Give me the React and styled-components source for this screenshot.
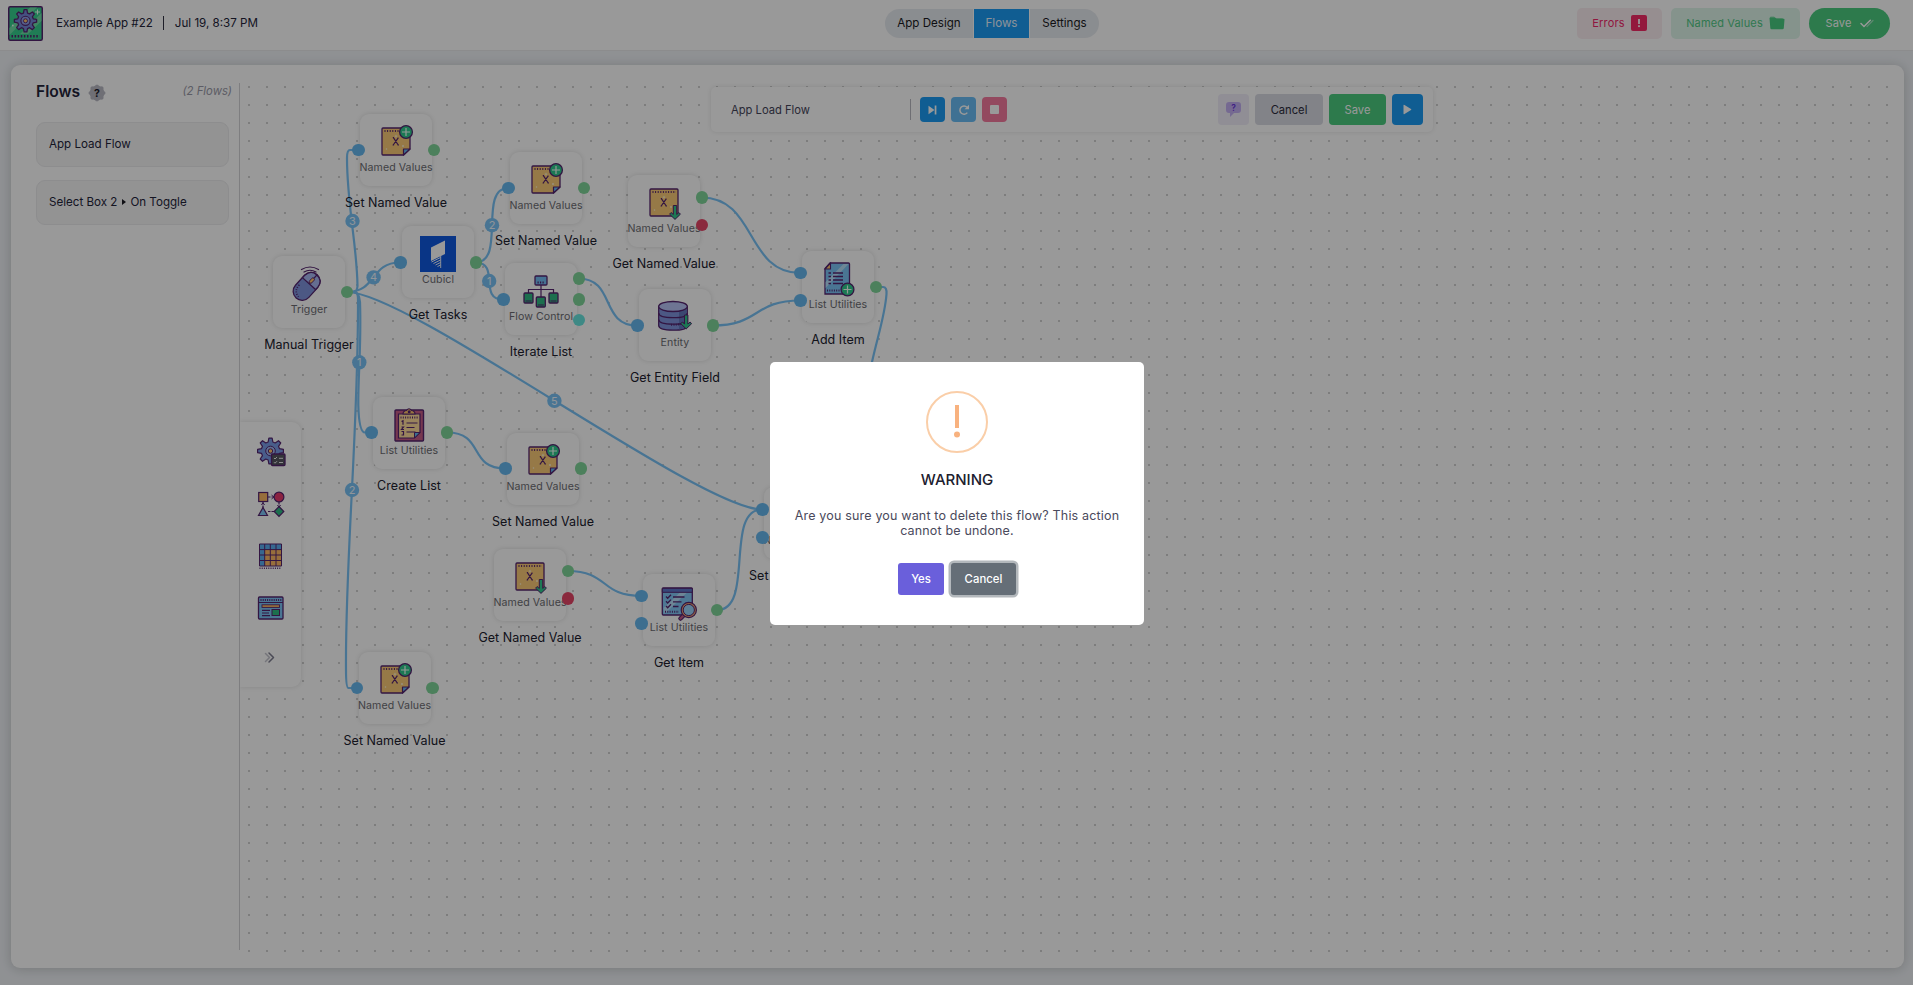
import React from "react";
import styled, { createGlobalStyle } from "styled-components";

const Global = createGlobalStyle`
  * { box-sizing: border-box; }
  html, body { margin: 0; height: 100%; overflow: hidden; }
  body { font-family: Inter, "Liberation Sans", sans-serif; font-size: 11.6px; color: #24243a; background: #eff2f6; }
  button { font: inherit; border: 0; padding: 0; margin: 0; cursor: pointer; }
  svg { display: block; }
`;

const INK = "#55246f";

/* ---------- page shell ---------- */
const Page = styled.div`
  height: 985px;
  display: flex;
  flex-direction: column;
  background: #eff2f6;
`;
const Header = styled.header`
  height: 51px;
  flex: none;
  display: grid;
  grid-template-columns: 885px 1fr auto;
  padding-right: 23px;
  background: #fff;
  border-bottom: 1px solid #eaeaec;
`;
const Brand = styled.div`
  display: flex;
  align-items: flex-start;
  padding: 6px 0 0 8px;
`;
const BrandText = styled.div`
  display: flex;
  align-items: center;
  height: 34px;
  margin-left: 13px;
`;
const BrandRule = styled.i`
  width: 1px;
  height: 14px;
  margin: 0 11px 0 10px;
  background: #333344;
`;
const Tabs = styled.nav`
  display: flex;
  gap: 1px;
  padding-top: 9px;
`;
const Tab = styled.button`
  width: ${(p) => p.$w}px;
  height: 29px;
  padding-bottom: 1px;
  background: ${(p) => (p.$active ? "#1b9cf4" : "#e7ebf0")};
  color: ${(p) => (p.$active ? "#e8f4ff" : "#1a1a22")};
  border-radius: ${(p) => p.$radius || "0"};
`;
const HeaderActions = styled.div`
  display: flex;
  gap: 9px;
  padding-top: 8px;
`;
const HeaderButton = styled.button`
  display: flex;
  align-items: center;
  justify-content: center;
  gap: ${(p) => p.$gap || 6}px;
  width: ${(p) => p.$w}px;
  height: 31px;
  padding-bottom: 1px;
  font-size: 11px;
  letter-spacing: 0.15px;
  border-radius: ${(p) => p.$radius || 5}px;
  background: ${(p) => p.$bg};
  color: ${(p) => p.$fg};
`;
const Board = styled.main`
  flex: 1;
  display: flex;
  margin: 14px 9px 17px 11px;
  padding: 18px 10px 15px 25px;
  border-radius: 9px;
  background: #fff;
  box-shadow: 0 1px 12px rgba(20, 25, 20, 0.2);
`;

/* ---------- sidebar ---------- */
const Sidebar = styled.aside`
  width: 204px;
  height: 867px;
  border-right: 1px solid #d2d2d6;
  flex: none;
`;
const SidebarHead = styled.div`
  display: flex;
  align-items: center;
  height: 17px;
  padding-right: 7px;
`;
const SidebarTitle = styled.h1`
  margin: -1px 0 0;
  font-size: 15.6px;
  font-weight: 600;
`;
const Badge = styled.span`
  margin: 3px 0 0 8px;
`;
const Count = styled.em`
  margin-left: auto;
  margin-top: -2px;
  font-size: 11.3px;
  color: #9a9aa8;
`;
const FlowList = styled.div`
  display: flex;
  flex-direction: column;
  gap: 13px;
  margin-top: 22px;
`;
const FlowItem = styled.div`
  display: flex;
  align-items: center;
  width: 193px;
  height: 45px;
  padding: 0 12px 2px;
  border: 1px solid #ebebed;
  border-radius: 9px;
  background: #f5f5f6;
`;
const Caret = styled.i`
  margin: 0 4px 0 5px;
  border: 3.5px solid transparent;
  border-left: 4px solid #1a1a22;
  border-right: 0;
`;

/* ---------- canvas ---------- */
const Canvas = styled.section`
  position: relative;
  flex: 1;
  height: 870px;
  overflow: hidden;
  background: conic-gradient(from 270deg at 2px 2px, #d0d0d0 90deg, transparent 0) 8px 3px / 18px 18px;
`;
const Wires = styled.svg`
  position: absolute;
  left: -240px;
  top: -83px;
`;
const NodeBox = styled.div`
  position: absolute;
  left: ${(p) => p.$x - 240}px;
  top: ${(p) => p.$y - 83}px;
  width: 72px;
  height: 72px;
  display: flex;
  flex-direction: column;
  align-items: center;
  border-radius: 9px;
  background: #fff;
  box-shadow: 0 0 5px rgba(0, 0, 0, 0.13);
`;
const NodeIcon = styled.div`
  height: 46px;
  display: flex;
  align-items: flex-start;
  padding-top: 10px;
`;
const NodeKind = styled.div`
  font-size: 10.6px;
  line-height: 16px;
  letter-spacing: 0.08px;
  white-space: nowrap;
  color: #6c6c72;
`;
const NodeName = styled.div`
  margin-top: 19px;
  font-size: 12.5px;
  line-height: 16px;
  letter-spacing: 0.03px;
  white-space: nowrap;
  color: #20202e;
`;
const Port = styled.i`
  position: absolute;
  left: ${(p) => (p.$side === "in" ? -8 : 67.5)}px;
  top: ${(p) => p.$at - 6.25}px;
  width: 12.5px;
  height: 12.5px;
  border-radius: 50%;
  background: ${(p) => p.$c};
`;
const Palette = styled.div`
  position: absolute;
  left: 0;
  top: 339px;
  width: 61px;
  height: 265px;
  padding: 15px 0 0 16px;
  display: flex;
  flex-direction: column;
  gap: 22px;
  border-radius: 0 9px 9px 0;
  background: #fff;
  box-shadow: 0 0 5px rgba(0, 0, 0, 0.12);
`;
const PaletteItem = styled.div`
  width: 30px;
  height: 30px;
`;
const Toolbar = styled.div`
  position: absolute;
  left: 471px;
  top: 4px;
  width: 722px;
  height: 45px;
  display: flex;
  align-items: center;
  padding: 0 10px 0 20px;
  border-radius: 5px;
  background: #fff;
  box-shadow: 0 0 5px rgba(0, 0, 0, 0.1);
`;
const ToolbarName = styled.div`
  width: 179px;
  font-size: 11.2px;
  color: #45455a;
`;
const ToolbarRule = styled.i`
  width: 1px;
  height: 21px;
  margin-right: 9px;
  background: #b8b8c0;
`;
const ToolGroup = styled.div`
  display: flex;
  gap: 6px;
  margin-left: ${(p) => (p.$end ? "auto" : "0")};
`;
const ToolButton = styled.button`
  width: ${(p) => p.$w || 25}px;
  height: ${(p) => p.$h || 25}px;
  display: flex;
  align-items: center;
  justify-content: center;
  font-size: 11.2px;
  border-radius: 4px;
  background: ${(p) => p.$bg};
  color: ${(p) => p.$fg || "#fff"};
`;

/* ---------- dialog ---------- */
const Scrim = styled.div`
  position: fixed;
  inset: 0;
  display: flex;
  justify-content: center;
  align-items: flex-start;
  padding: 362px 0 0 1px;
  background: rgba(0, 0, 0, 0.4);
`;
const Dialog = styled.div`
  width: 374px;
  height: 263px;
  display: flex;
  flex-direction: column;
  align-items: center;
  padding-top: 29px;
  border-radius: 5px;
  background: #fff;
`;
const DialogTitle = styled.h2`
  margin: 17px 0 0;
  font-size: 15px;
  line-height: 20px;
  font-weight: 500;
  color: #20202e;
`;
const DialogText = styled.p`
  width: 340px;
  margin: 18px 0 0;
  text-align: center;
  font-size: 12.5px;
  line-height: 15px;
  letter-spacing: 0.17px;
  color: #4a4a5c;
`;
const DialogActions = styled.div`
  display: flex;
  gap: 7px;
  margin-top: 25px;
`;
const DialogButton = styled.button`
  width: ${(p) => p.$w}px;
  height: 32px;
  border-radius: 3px;
  font-size: 11.3px;
  font-weight: 500;
  letter-spacing: 0.05px;
  color: #fff;
  background: ${(p) => p.$bg};
  box-shadow: ${(p) => (p.$focus ? "0 0 0 2.5px #b3b8bc" : "none")};
`;

/* ---------- drawings ---------- */
const gearPath = (cx, cy, r, R, n = 8) => {
  let d = "";
  for (let i = 0; i < n; i++) {
    const a = (i * 2 * Math.PI) / n;
    const s = Math.PI / n;
    [[-0.65, r], [-0.32, R], [0.32, R], [0.65, r]].forEach(([k, q], j) => {
      const x = cx + q * Math.sin(a + k * s);
      const y = cy - q * Math.cos(a + k * s);
      d += (i || j ? "L" : "M") + x.toFixed(2) + " " + y.toFixed(2);
    });
  }
  return d + "Z";
};

const AppLogo = () => (
  <svg width="35" height="35" viewBox="0 0 35 35">
    <rect x="0.75" y="0.75" width="33.5" height="33.5" rx="1.5" fill="#36cf8e" stroke={INK} strokeWidth="1.5" />
    <path d="M1.5 22 22 1.5h7L1.5 29zM12 28 33.5 7v8L20 28z" fill="#6fdca6" />
    <path d={gearPath(17.5, 14.8, 8, 11.2)} fill="#7487d6" stroke={INK} strokeWidth="1.3" strokeLinejoin="round" />
    <circle cx="17.5" cy="14.8" r="4.6" fill="#8ea0e8" stroke={INK} strokeWidth="1.1" />
    <circle cx="17.5" cy="14.8" r="2" fill="#ffc46b" stroke={INK} strokeWidth="0.9" />
    <path d="M3.5 30.2h28" stroke={INK} strokeWidth="2.4" strokeDasharray="1.5 1.6" />
    <path d="M29.5 3.5v5M27 6h5" stroke="#e6fff3" strokeWidth="1.1" />
    <circle cx="4.8" cy="19.5" r="0.9" fill="#e6fff3" />
  </svg>
);

const Plus = ({ x, y }) => (
  <g>
    <circle cx={x} cy={y} r="6.4" fill="#30c88c" stroke={INK} strokeWidth="1.3" />
    <path d={`M${x} ${y - 4}v8M${x - 4} ${y}h8`} stroke="#f2fff9" strokeWidth="1.2" />
  </g>
);
const DownArrow = ({ x, y }) => (
  <path
    d={`M${x - 1.7} ${y}h3.4v9l2.2-2 1.5 1.7-5.4 5.2-5.4-5.2 1.5-1.7 2.2 2z`}
    fill="#30c88c" stroke={INK} strokeWidth="1" strokeLinejoin="round"
  />
);

const NoteIcon = ({ mode }) => (
  <svg width="36" height="36" viewBox="0 0 36 36">
    <path
      d={mode === "set" ? "M5 4h26q1 0 1 1v20l-6.500 6H5q-1 0-1-1V5q0-1 1-1z" : "M5 4h26q1 0 1 1v25q0 1-1 1H5q-1 0-1-1V5q0-1 1-1z"}
      fill="#fbca77" stroke={INK} strokeWidth="1.3"
    />
    <path d="M6.5 7.1H30" stroke={INK} strokeWidth="2" strokeDasharray="1 1.6" />
    <path d="m15.400 13.600 4.800 7.400M20.400 13.600 15.200 21M14.600 21h1.500M19.500 21H21M14.800 13.600h1.300" fill="none" stroke={INK} strokeWidth="1.2" />
    <circle cx="8.5" cy="25" r="0.8" fill="#fff4d8" />
    <circle cx="25" cy="22" r="0.9" fill="#fff4d8" />
    <path d="M18 10.800v2.800M16.700 12.200h2.600" stroke="#fff4d8" strokeWidth="0.8" />
    {mode === "set" ? (
      <>
        <path d="M25.500 31v-6H32z" fill="#65b7f2" stroke={INK} strokeWidth="1.2" strokeLinejoin="round" />
        <Plus x={28} y={8} />
      </>
    ) : (
      <DownArrow x={29} y={20.5} />
    )}
  </svg>
);

const MouseIcon = () => (
  <svg width="36" height="36" viewBox="0 0 36 36">
    <path d="M10.500 3.500q8.500-5 17 0M13 6q6-3.500 12 0" fill="none" stroke={INK} strokeWidth="1.2" strokeLinecap="round" />
    <g transform="rotate(42 15.5 20.5)">
      <rect x="6.5" y="4.5" width="18" height="31.5" rx="9" fill="#7f93dc" stroke={INK} strokeWidth="1.3" />
      <path d="M6.700 16.700v-3.500Q7.700 5.200 15.500 5q8 .2 8.800 8.200v3.500z" fill="#a9b8f2" stroke={INK} strokeWidth="1.2" />
      <path d="M15.500 5v11.700" stroke={INK} strokeWidth="1.2" />
      <rect x="14" y="9.5" width="3" height="6" rx="1.3" fill="#ffc46b" stroke={INK} strokeWidth="0.9" />
      <path d="M9 24q0 8.500 7.500 9.500" fill="none" stroke={INK} strokeWidth="1.6" strokeDasharray="1 1.5" />
    </g>
  </svg>
);

const CubiclIcon = () => (
  <svg width="36" height="36" viewBox="0 0 36 36">
    <rect width="36" height="36" fill="#1059e0" />
    <path d="m11 11.500 14-7v13.500l-14 7z" fill="#fff" />
    <path d="m11.500 26 9-4.500M13.500 27.500l7-3.500M15.500 29l5-2.500M17.500 30.500l3-1.500M20.700 20v12" stroke="#fff" strokeWidth="0.9" />
  </svg>
);

const FlowIcon = () => (
  <svg width="36" height="36" viewBox="0 0 36 36">
    <path d="M18 12v12M5.500 22v-5.500h25V22" fill="none" stroke={INK} strokeWidth="1.2" />
    <rect x="12" y="3" width="12" height="9" rx="1" fill="#74bdf3" stroke={INK} strokeWidth="1.3" />
    <path d="M14.500 9.500h7" stroke={INK} strokeWidth="2" strokeDasharray="1.2 1.3" />
    {[[1, 20], [13.3, 24], [26, 20]].map(([x, y]) => (
      <g key={x}>
        <rect x={x} y={y} width="9" height="10" rx="1" fill="#2fba83" stroke={INK} strokeWidth="1.3" />
        <path d={`M${x + 1.5} ${y + 8}h6`} stroke={INK} strokeWidth="1" />
      </g>
    ))}
  </svg>
);

const DatabaseIcon = () => (
  <svg width="38" height="36" viewBox="0 0 38 36">
    <path d="M2.700 7.500v19q0 4.700 14.300 4.700t14.300-4.700v-19z" fill="#7f93dc" stroke={INK} strokeWidth="1.3" />
    <path d="M23 12v18.500q7.500-1.500 7.700-4V8z" fill="#6377bd" />
    <ellipse cx="17" cy="7.5" rx="14.3" ry="5" fill="#b7c3f5" stroke={INK} strokeWidth="1.3" />
    <path d="M2.700 14q0 4.700 14.300 4.700T31.300 14M2.700 20.500q0 4.700 14.300 4.700t14.300-4.700" fill="none" stroke={INK} strokeWidth="1.3" />
    <path d="M15 25.800q8 0 13-1.500" fill="none" stroke={INK} strokeWidth="2" strokeDasharray="1 1.3" />
    <DownArrow x={30.2} y={16} />
  </svg>
);

const DocIcon = () => (
  <svg width="36" height="36" viewBox="0 0 36 36">
    <path d="M10 2h18.500q1 0 1 1v29q0 1-1 1H5V7.500z" fill="#7cc3f5" stroke={INK} strokeWidth="1.3" />
    <path d="M5.600 21 23.500 3h5L5.600 27z" fill="#b7e0fb" />
    <path d="M5 8l5.500-5.800V8z" fill="#ffc46b" stroke={INK} strokeWidth="1.1" />
    <path d="M13 12h10M13 15.500h10M13 19h10M13 22.500h10" stroke={INK} strokeWidth="1.3" />
    <path d="M8.500 12H11M8.500 15.500H11M8.500 19H11M8.500 22.500H11" stroke={INK} strokeWidth="1.3" />
    <path d="M7 29.500h12.500" stroke={INK} strokeWidth="2" strokeDasharray="1 1.3" />
    <Plus x={27.5} y={28.5} />
  </svg>
);

const ClipboardIcon = () => (
  <svg width="36" height="36" viewBox="0 0 36 36">
    <rect x="4" y="3" width="28.5" height="31" rx="1" fill="#c65c86" stroke={INK} strokeWidth="1.4" />
    <path d="M7.500 7h21.500v18.500l-5.500 5.500h-16z" fill="#ffdc9c" stroke={INK} strokeWidth="1.2" />
    <path d="M23.500 31v-5.500H29z" fill="#65b7f2" stroke={INK} strokeWidth="1" />
    <path d="M12 7q0-3 3.500-3.500Q18 0 20.500 3.500 24 4 24 7z" fill="#ffc46b" stroke={INK} strokeWidth="1.2" />
    <circle cx="18.2" cy="4.8" r="1.5" fill={INK} />
    <path d="M9.500 10.500h18" stroke={INK} strokeWidth="2" strokeDasharray="1 1.3" />
    <path d="M15.500 16h11M15.500 20.500h8M15.500 25h9M10.500 14.500l1.500-.8v4M10.500 20h2l-2 2.500h2.500M10.500 24.500h2v3.500h-2" fill="none" stroke={INK} strokeWidth="1.2" />
  </svg>
);

const SearchListIcon = () => (
  <svg width="38" height="38" viewBox="0 0 38 38">
    <rect x="2.3" y="4" width="30" height="27" rx="1" fill="#82c6f6" stroke={INK} strokeWidth="1.3" />
    <path d="M3.500 24 20 8.500h7L4.500 30z" fill="#b7e0fb" />
    <path d="M2.300 4.300h30v4h-30z" fill="#5d75c9" stroke={INK} strokeWidth="1" />
    <path d="M6 12.500l1.700 1.700L11 10.800M6 17.300l1.700 1.700 3.300-3.400M6 22l1.700 1.700 3.300-3.400M13 13h11.500M13 17.800h8.500M13 22.500h5.500" fill="none" stroke={INK} strokeWidth="1.3" />
    <path d="M5 27.800h14" stroke={INK} strokeWidth="2" strokeDasharray="1 1.3" />
    <path d="m23.500 31.500-3 3" stroke={INK} strokeWidth="4.5" strokeLinecap="round" />
    <path d="m23.500 31.500-3 3" stroke="#c65c86" strokeWidth="2.3" strokeLinecap="round" />
    <circle cx="28.8" cy="26" r="7.6" fill="#f7a66e" stroke={INK} strokeWidth="1.2" />
    <circle cx="28.8" cy="26" r="5.6" fill="#9bd4fa" stroke={INK} strokeWidth="1" />
  </svg>
);

const GearTerminalIcon = () => (
  <svg width="30" height="30" viewBox="0 0 30 30">
    <path d={gearPath(14.5, 14, 9.3, 13)} fill="#7a9be6" stroke={INK} strokeWidth="1.2" strokeLinejoin="round" />
    <circle cx="14.5" cy="14" r="4.8" fill="#9fb8f2" stroke={INK} strokeWidth="1" />
    <circle cx="14.5" cy="14" r="2.2" fill="#ffc46b" stroke={INK} strokeWidth="1" />
    <rect x="15.5" y="17" width="13.5" height="11.5" rx="1" fill="#55555f" stroke={INK} strokeWidth="1.3" />
    <path d="m18 21 1 1 2-2m2 1.300h4M18 25.200l1 1 2-2m2 1.300h4" fill="none" stroke="#fff" strokeWidth="0.9" />
  </svg>
);
const ShapesIcon = () => (
  <svg width="30" height="30" viewBox="0 0 30 30">
    <path d="M12 8h6M7 13v6M23 13v5M12 22.500h6" stroke={INK} strokeWidth="1.2" strokeDasharray="2.5 1" />
    <path d="m15.500 6 2.500 2-2.500 2M5.300 16 7 13.800 8.700 16M21.300 16l1.700 2.200 1.700-2.200" fill="none" stroke={INK} strokeWidth="0.9" />
    <rect x="2.7" y="3.5" width="9" height="9" fill="#fcb864" stroke={INK} strokeWidth="1.2" />
    <circle cx="23" cy="8" r="4.9" fill="#e83a6d" stroke={INK} strokeWidth="1.2" />
    <path d="m7 18.500 4.500 8h-9z" fill="#7cc3f5" stroke={INK} strokeWidth="1.2" />
    <path d="m23 17.500 4.800 5-4.800 5-4.800-5z" fill="#30b983" stroke={INK} strokeWidth="1.2" />
  </svg>
);
const GridIcon = () => (
  <svg width="30" height="30" viewBox="0 0 30 30">
    <rect x="3.5" y="3" width="22" height="22" fill="#fcb864" />
    <path d="M3.500 3h22v5.500H8.700V25H3.500z" fill="#5aaef0" />
    <path d="M3.500 3h22v22h-22zM8.700 3v22M14.300 3v22M20 3v22M3.500 8.600h22M3.500 14h22M3.500 19.500h22" fill="none" stroke={INK} strokeWidth="1" />
    <path d="M3.500 27.200h22" stroke={INK} strokeWidth="1.4" strokeDasharray="1 1.2" />
  </svg>
);
const WindowIcon = () => (
  <svg width="30" height="30" viewBox="0 0 30 30">
    <rect x="2.5" y="4" width="24.5" height="22" rx="1" fill="#7cc3f5" stroke={INK} strokeWidth="1.3" />
    <path d="M4.500 7h21" stroke={INK} strokeWidth="2" strokeDasharray="1 1.2" />
    <path d="M2.500 9.500H27" stroke={INK} strokeWidth="1" />
    <rect x="6" y="11.8" width="17.5" height="2.6" fill="#fcb864" stroke={INK} strokeWidth="0.9" />
    <path d="M6 17.300h8M6 20h7M6 22.700h8" stroke={INK} strokeWidth="1.2" />
    <rect x="16" y="16.5" width="7.5" height="6" fill="#30b983" stroke={INK} strokeWidth="1" />
  </svg>
);
const MoreIcon = () => (
  <svg width="30" height="30" viewBox="0 0 30 30" fill="none" strokeWidth="1.5" strokeLinecap="round" strokeLinejoin="round">
    <path d="m9.500 8.500 4 4-4 4" stroke="#c3c3ce" />
    <path d="m13 8 4.500 4.500L13 17" stroke="#7d7d90" />
  </svg>
);

const HelpSeal = () => (
  <svg width="18" height="18" viewBox="0 0 18 18">
    <path d={gearPath(9, 9, 7.4, 8.4)} fill="#b9b9c4" />
    <text x="9" y="12.8" textAnchor="middle" fontSize="10.5" fontWeight="700" fill="#1c1c2b">?</text>
  </svg>
);
const ErrorMark = () => (
  <svg width="16" height="16" viewBox="0 0 16 16">
    <rect width="16" height="16" rx="2" fill="#f52a66" />
    <rect x="7.1" y="4" width="1.8" height="5" fill="#fff" />
    <rect x="7.1" y="10.3" width="1.8" height="1.8" fill="#fff" />
  </svg>
);
const FolderMark = () => (
  <svg width="16" height="14" viewBox="0 0 16 14">
    <path d="M1 3V1.500Q1 .5 2 .5h3l1.500 1.500H13q1 0 1.200 1z" fill="#8fdfb3" />
    <path d="M.5 2.300Q.5 1.600 1.300 1.600H6l1.500 1.200h7.200q.8 0 .8.700l-.7 8.500q-.1 1.300-1.300 1.300h-11q-1.100 0-1.200-1.300z" fill="#48cb80" />
  </svg>
);
const DoubleCheck = () => (
  <svg width="14" height="9" viewBox="0 0 14 9" fill="none" strokeLinecap="round">
    <path d="m7 7.500 6-6" stroke="#9fe2bc" strokeWidth="1.2" />
    <path d="m1 4.500 3 3 6.300-6.300" stroke="#fff" strokeWidth="1.5" />
  </svg>
);

const NextGlyph = () => (
  <svg width="9" height="10" viewBox="0 0 9 10"><path d="M.5.800 6.500 5 .5 9.200zM6.700.500h1.700v9H6.700z" fill="#fff" /></svg>
);
const RedoGlyph = () => (
  <svg width="12" height="12" viewBox="0 0 12 12">
    <path d="M9.300 8.600A4.100 4.100 0 1 1 9 3.300" fill="none" stroke="#fff" strokeWidth="1.5" />
    <path d="M11 .800v4.400H6.600z" fill="#fff" />
  </svg>
);
const StopGlyph = () => (
  <svg width="9" height="9" viewBox="0 0 9 9"><rect width="9" height="9" rx="1" fill="#fff" /></svg>
);
const PlayGlyph = () => (
  <svg width="9" height="11" viewBox="0 0 9 11"><path d="M.5 1.300Q.5.200 1.500.900l6.500 4q.7.600 0 1.200l-6.500 4q-1 .600-1-.5z" fill="#fff" /></svg>
);
const HelpBubble = () => (
  <svg width="15" height="15" viewBox="0 0 15 15">
    <path d="M3 0h9q3 0 3 3v5q0 3-3 3H8l-4 4v-4H3q-3 0-3-3V3q0-3 3-3z" fill="#c3b0f2" />
    <text x="7.5" y="8.8" textAnchor="middle" fontSize="8.5" fontWeight="600" fill="#6a35dc">?</text>
  </svg>
);
const WarningMark = () => (
  <svg width="62" height="62" viewBox="0 0 62 62">
    <circle cx="31" cy="31" r="30" fill="none" stroke="#facea8" strokeWidth="2" />
    <rect x="29" y="14" width="4" height="23" fill="#f8b27f" />
    <circle cx="31" cy="43.5" r="3" fill="#f8b27f" />
  </svg>
);

/* ---------- data ---------- */
const BLUE = "#66b8ee";
const GREEN = "#7fd599";
const RED = "#e64567";
const TEAL = "#68e5de";
const WIRE = "#79c2f5";

const noteSet = <NoteIcon mode="set" />;
const noteGet = <NoteIcon mode="get" />;
const NODES = [
  { x: 360, y: 114, kind: "Named Values", name: "Set Named Value", icon: noteSet, ins: [36], outs: [[36, GREEN]] },
  { x: 510, y: 152, kind: "Named Values", name: "Set Named Value", icon: noteSet, ins: [36], outs: [[36, GREEN]] },
  { x: 628, y: 175, kind: "Named Values", name: "Get Named Value", icon: noteGet, ins: [], outs: [[22.5, GREEN], [50, RED]] },
  { x: 402, y: 226, kind: "Cubicl", name: "Get Tasks", icon: <CubiclIcon />, ins: [36.5], outs: [[36.5, GREEN]] },
  { x: 273, y: 256, kind: "Trigger", name: "Manual Trigger", icon: <MouseIcon />, ins: [], outs: [[36, GREEN]] },
  { x: 505, y: 263, kind: "Flow Control", name: "Iterate List", icon: <FlowIcon />, ins: [36.5], outs: [[15.5, GREEN], [36.7, GREEN], [57, TEAL]] },
  { x: 639, y: 289, kind: "Entity", name: "Get Entity Field", icon: <DatabaseIcon />, ins: [36.5], outs: [[36.5, GREEN]] },
  { x: 802, y: 251, kind: "List Utilities", name: "Add Item", icon: <DocIcon />, ins: [22, 49.5], outs: [[36, GREEN]] },
  { x: 373, y: 397, kind: "List Utilities", name: "Create List", icon: <ClipboardIcon />, ins: [35.5], outs: [[35.5, GREEN]] },
  { x: 507, y: 433, kind: "Named Values", name: "Set Named Value", icon: noteSet, ins: [35.5], outs: [[35.5, GREEN]] },
  { x: 494, y: 549, kind: "Named Values", name: "Get Named Value", icon: noteGet, ins: [], outs: [[22, GREEN], [49.5, RED]] },
  { x: 643, y: 574, kind: "List Utilities", name: "Get Item", icon: <SearchListIcon />, ins: [22, 49.5], outs: [[36, GREEN]] },
  { x: 358.5, y: 652, kind: "Named Values", name: "Set Named Value", icon: noteSet, ins: [36], outs: [[36, GREEN]] },
  { x: 764, y: 487, kind: "Named Values", name: "Set Named Value", icon: noteSet, ins: [22.5, 50.5], outs: [[36, GREEN]] },
];

/* x1, y1, x2, y2, horizontal pull */
const EDGES = [
  [347, 292, 400, 262.5, 30],
  [347, 292, 762, 509.5, 62],
  [475.5, 262.5, 508.5, 188, 31],
  [475.5, 262.5, 503, 299.5, 25],
  [578.5, 278.5, 637, 325.5, 37],
  [701.5, 197.5, 800.5, 273, 55],
  [712.5, 325.5, 800.5, 300.5, 48],
  [447, 432.5, 505.5, 468.5, 38],
  [567.5, 571, 641.5, 596, 42],
  [717, 610, 762, 509.5, 38],
];

/* steep wires that leave and enter their ports through short stubs */
const STEEP = [
  "M347 292H354Q357 292 357.500 286C357 245 347 205 347 158Q347 150 350 150H358",
  "M347 292H355Q358 292 358 300C358.500 430 345 560 346 670Q346 688 348.500 688H357",
  "M347 292H354Q359 292 360 302C361.500 345 358 375 358.300 405Q359 432.500 365 432.500H371.500",
  "M876 287H883Q887 287 886.500 294C885 315 878 335 872 362L868 380",
];

const STEPS = [
  [352.5, 221, 3],
  [352, 490, 2],
  [359.3, 362.3, 1],
  [373.6, 277.4, 4],
  [554.4, 400.8, 5],
  [492, 225.2, 2],
  [489.2, 281, 1],
];

export default function App() {
  return (
    <>
      <Global />
      <Page>
        <Header>
          <Brand>
            <AppLogo />
            <BrandText>
              Example App #22<BrandRule />Jul 19, 8:37 PM
            </BrandText>
          </Brand>
          <Tabs>
            <Tab $w={88} $radius="15px 0 0 15px">App Design</Tab>
            <Tab $w={55} $active>Flows</Tab>
            <Tab $w={69} $radius="0 15px 15px 0">Settings</Tab>
          </Tabs>
          <HeaderActions>
            <HeaderButton $w={85} $bg="#fbedf1" $fg="#f2276a">Errors <ErrorMark /></HeaderButton>
            <HeaderButton $w={129} $bg="#def6ea" $fg="#50c885">Named Values <FolderMark /></HeaderButton>
            <HeaderButton $w={81} $gap={8} $radius={16} $bg="#4bcb7f" $fg="#fff">Save <DoubleCheck /></HeaderButton>
          </HeaderActions>
        </Header>
        <Board>
          <Sidebar>
            <SidebarHead>
              <SidebarTitle>Flows</SidebarTitle>
              <Badge><HelpSeal /></Badge>
              <Count>(2 Flows)</Count>
            </SidebarHead>
            <FlowList>
              <FlowItem>App Load Flow</FlowItem>
              <FlowItem>Select Box 2<Caret />On Toggle</FlowItem>
            </FlowList>
          </Sidebar>
          <Canvas>
            <Wires width="1654" height="960" viewBox="0 0 1654 960" fill="none" stroke={WIRE} strokeWidth="2.2">
              {EDGES.map(([x1, y1, x2, y2, d], i) => (
                <path key={i} d={`M${x1} ${y1}C${x1 + d} ${y1} ${x2 - d} ${y2} ${x2} ${y2}`} />
              ))}
              {STEEP.map((d) => <path key={d} d={d} />)}
            </Wires>
            {NODES.map((n, i) => (
              <NodeBox key={i} $x={n.x} $y={n.y}>
                <NodeIcon>{n.icon}</NodeIcon>
                <NodeKind>{n.kind}</NodeKind>
                <NodeName>{n.name}</NodeName>
                {n.ins.map((at) => <Port key={at} $side="in" $at={at} $c={BLUE} />)}
                {n.outs.map(([at, c]) => <Port key={at} $side="out" $at={at} $c={c} />)}
              </NodeBox>
            ))}
            <Wires width="1654" height="960" viewBox="0 0 1654 960">
              {STEPS.map(([x, y, n]) => (
                <g key={`${x}-${n}`}>
                  <circle cx={x} cy={y} r="7.2" fill={WIRE} />
                  <text x={x} y={y + 4} textAnchor="middle" fontSize="11" fill="#f0f8ff">{n}</text>
                </g>
              ))}
            </Wires>
            <Palette>
              <PaletteItem><GearTerminalIcon /></PaletteItem>
              <PaletteItem><ShapesIcon /></PaletteItem>
              <PaletteItem><GridIcon /></PaletteItem>
              <PaletteItem><WindowIcon /></PaletteItem>
              <PaletteItem><MoreIcon /></PaletteItem>
            </Palette>
            <Toolbar>
              <ToolbarName>App Load Flow</ToolbarName>
              <ToolbarRule />
              <ToolGroup>
                <ToolButton $bg="#1b9cf4"><NextGlyph /></ToolButton>
                <ToolButton $bg="#69bdf5"><RedoGlyph /></ToolButton>
                <ToolButton $bg="#f57a9f"><StopGlyph /></ToolButton>
              </ToolGroup>
              <ToolGroup $end>
                <ToolButton $w={31} $h={31} $bg="#f1edf9"><HelpBubble /></ToolButton>
                <ToolButton $w={68} $h={31} $bg="#d9dae3" $fg="#2c2c3c">Cancel</ToolButton>
                <ToolButton $w={57} $h={31} $bg="#4bcb7f">Save</ToolButton>
                <ToolButton $w={31} $h={31} $bg="#1b9cf4"><PlayGlyph /></ToolButton>
              </ToolGroup>
            </Toolbar>
          </Canvas>
        </Board>
      </Page>
      <Scrim>
        <Dialog>
          <WarningMark />
          <DialogTitle>WARNING</DialogTitle>
          <DialogText>Are you sure you want to delete this flow? This action cannot be undone.</DialogText>
          <DialogActions>
            <DialogButton $w={46} $bg="#6a5fdb">Yes</DialogButton>
            <DialogButton $w={65} $bg="#656e77" $focus>Cancel</DialogButton>
          </DialogActions>
        </Dialog>
      </Scrim>
    </>
  );
}
